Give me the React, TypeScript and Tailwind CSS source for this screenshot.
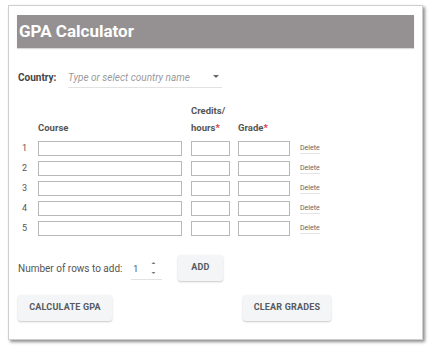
import React from "react";

const ROWS = [1, 2, 3, 4, 5];

function Btn({ label, className = "" }: { label: string; className?: string }) {
  return (
    <button
      className={`h-[26px] rounded-[3px] bg-[#f4f5f6] px-[10px] text-[9px] font-bold tracking-[0.2px] text-[#555a60] shadow-[0_1px_2px_rgba(0,0,0,0.22)] ${className}`}
    >
      {label}
    </button>
  );
}

export default function App() {
  return (
    <div className="h-[352px] w-[431px] bg-white pl-[8px] pt-[5px] font-['Roboto',sans-serif]">
      <div className="h-[335px] w-[415px] border border-[#cfcfcf] bg-white px-[8px] pt-[9px] shadow-[2px_2px_3px_rgba(0,0,0,0.45)]">
        <div className="flex h-[33px] w-[397px] items-center bg-[#959192] pl-[2px] shadow-[0_1px_1px_rgba(0,0,0,0.15)]">
          <span className="text-[17px] font-bold leading-none text-white">GPA Calculator</span>
        </div>

        <div className="mt-[19px] flex items-center pl-[1px]">
          <span className="w-[50px] text-[10px] font-bold text-[#444]">Country:</span>
          <div className="flex h-[21px] w-[154px] items-center justify-between border-b border-[#e2e2e2] pr-[3px]">
            <span className="text-[10px] italic text-[#9a9a9a]">Type or select country name</span>
            <svg width="6" height="4" viewBox="0 0 6 4">
              <path d="M0 0 L6 0 L3 3 Z" fill="#666" />
            </svg>
          </div>
        </div>

        <div className="mt-[14px] flex text-[9.5px] font-bold leading-[17px] text-[#555]">
          <div className="w-[21px]" />
          <div className="w-[153px] pt-[17px]">Course</div>
          <div className="w-[47px]">
            Credits/
            <br />
            hours<span className="text-[#e0344a]">*</span>
          </div>
          <div className="pt-[17px]">
            Grade<span className="text-[#e0344a]">*</span>
          </div>
        </div>

        <div className="mt-[5px] flex flex-col gap-[5px]">
          {ROWS.map((n) => (
            <div key={n} className="flex h-[15px] items-center">
              <span className="w-[21px] pl-[5px] text-[9px] text-[#555]">{n}</span>
              <div className="h-[15px] w-[144px] border border-[#b8b8b8] bg-white" />
              <div className="ml-[9px] h-[15px] w-[39px] border border-[#b8b8b8] bg-white" />
              <div className="ml-[8px] h-[15px] w-[52px] border border-[#b8b8b8] bg-white" />
              <span className="ml-[10px] border-b border-[#e4e4e4] text-[7px] leading-[10px] text-[#666]">
                Delete
              </span>
            </div>
          ))}
        </div>

        <div className="mt-[19px] flex items-center pl-[1px]">
          <span className="w-[113px] text-[10px] text-[#555]">Number of rows to add:</span>
          <div className="flex h-[24px] w-[31px] items-center justify-between border-b border-[#e2e2e2] pl-[2px] pr-[6px]">
            <span className="pt-[4px] text-[9.5px] text-[#555]">1</span>
            <svg width="5" height="14" viewBox="0 0 5 14">
              <path d="M0.5 3 L2.5 1 L4.5 3 Z" fill="#777" />
              <path d="M0.5 11 L2.5 13 L4.5 11 Z" fill="#777" />
            </svg>
          </div>
          <Btn label="ADD" className="ml-[16px] w-[45px]" />
        </div>

        <div className="mt-[14px] flex items-center pl-[1px]">
          <Btn label="CALCULATE GPA" className="w-[94px]" />
          <Btn label="CLEAR GRADES" className="ml-[131px] w-[88px]" />
        </div>
      </div>
    </div>
  );
}
